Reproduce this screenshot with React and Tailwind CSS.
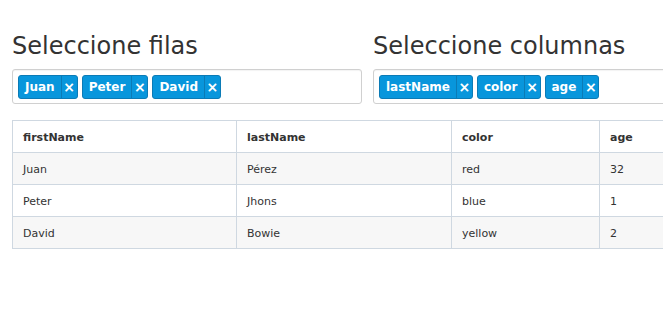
import React from "react";

const filas = ["Juan", "Peter", "David"];
const columnas = ["lastName", "color", "age"];

const datos = [
  { firstName: "Juan", lastName: "Pérez", color: "red", age: 32 },
  { firstName: "Peter", lastName: "Jhons", color: "blue", age: 1 },
  { firstName: "David", lastName: "Bowie", color: "yellow", age: 2 },
];

// Etiqueta azul con botón para quitar
function Tag({ label }) {
  return (
    <div className="flex h-[24px] items-stretch rounded-[3px] border border-[#0b7bb6] bg-[#0896dc] text-white">
      <span className="flex items-center px-[6px] text-[12px] font-bold leading-none">{label}</span>
      <span className="flex w-[16px] items-center justify-center border-l border-[#0b7bb6] text-[14px] font-bold leading-none">
        ×
      </span>
    </div>
  );
}

function Selector({ titulo, items }) {
  return (
    <div className="flex w-[350px] flex-col">
      <h2 className="mt-[32px] text-[24px] leading-[28px] text-[#333]">{titulo}</h2>
      <div className="mt-[9px] flex h-[35px] items-center gap-[4px] rounded-[3px] border border-[#d0d0d0] bg-white px-[5px] shadow-[inset_0_1px_1px_rgba(0,0,0,0.05)]">
        {items.map((it) => (
          <Tag key={it} label={it} />
        ))}
      </div>
    </div>
  );
}

export default function App() {
  const headers = ["firstName", "lastName", "color", "age"];
  const widths = ["w-[224px]", "w-[215px]", "w-[148px]", ""];

  return (
    <div className="min-h-screen overflow-hidden bg-white font-['DejaVu_Sans',Verdana,sans-serif] text-[#333]">
      <div className="w-[711px] pl-[12px] box-content">
        <div className="flex gap-[11px]">
          <Selector titulo="Seleccione filas" items={filas} />
          <Selector titulo="Seleccione columnas" items={columnas} />
        </div>

        <table className="mt-[16px] w-[711px] table-fixed border-collapse text-[11px]">
          <thead>
            <tr className="h-[32px]">
              {headers.map((h, i) => (
                <th key={h} className={`${widths[i]} border border-[#cfd8e1] px-[10px] pt-[3px] text-left font-bold`}>
                  {h}
                </th>
              ))}
            </tr>
          </thead>
          <tbody>
            {datos.map((d, i) => (
              <tr key={d.firstName} className={`h-[32px] ${i % 2 === 0 ? "bg-[#f7f7f7]" : "bg-white"}`}>
                {headers.map((h) => (
                  <td key={h} className="border border-[#cfd8e1] px-[10px] pt-[3px]">
                    {d[h]}
                  </td>
                ))}
              </tr>
            ))}
          </tbody>
        </table>
      </div>
    </div>
  );
}
